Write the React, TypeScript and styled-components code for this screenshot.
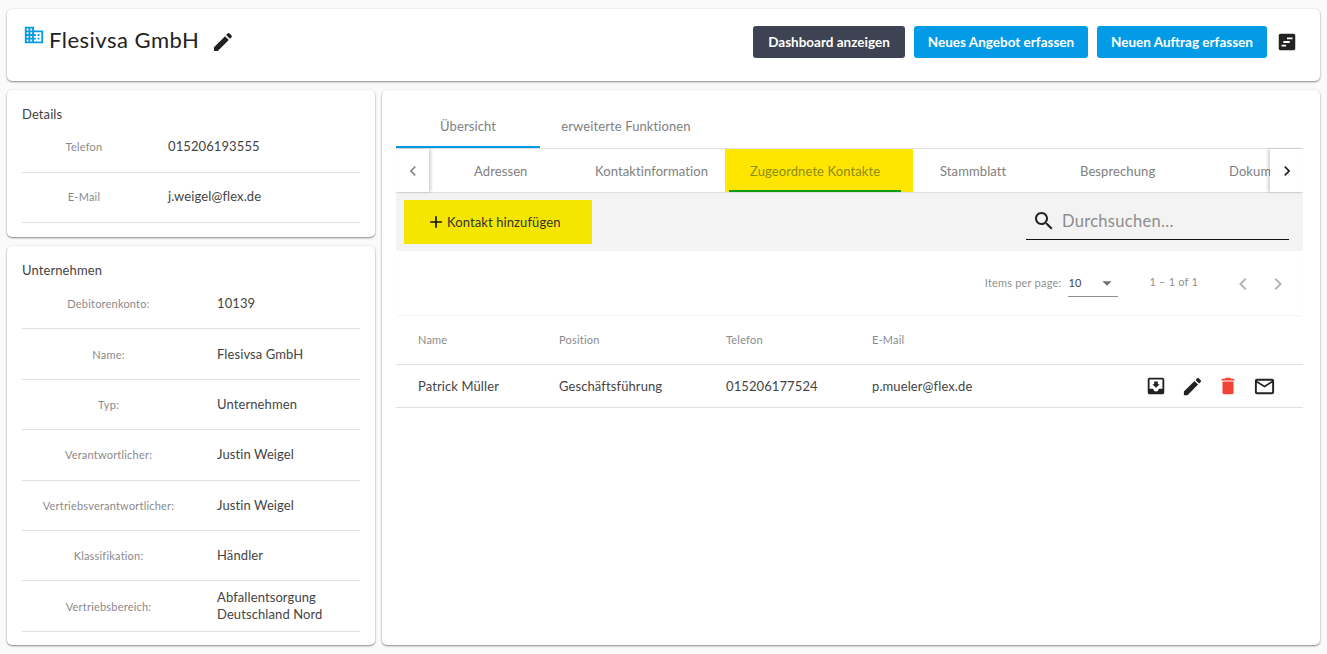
import * as React from 'react'
import styled, { createGlobalStyle } from 'styled-components'

const GlobalStyle = createGlobalStyle`
  html, body {
    margin: 0;
    padding: 0;
    background: #fafafa;
    font-family: "Lato", "Open Sans", sans-serif;
    color: #333;
  }
  * { box-sizing: border-box; }
`

const Page = styled.div`
  width: 1327px;
  height: 654px;
  padding: 9px 7px;
  overflow: hidden;
  display: flex;
  flex-direction: column;
  gap: 9px;
`
const Card = styled.div`
  background: #fff;
  border-radius: 5px;
  box-shadow: 0 1px 2px rgba(0, 0, 0, 0.45), 0 0 3px rgba(0, 0, 0, 0.06);
`
const Header = styled(Card)`
  height: 72px;
  flex: none;
  padding: 15px 22px 0 16px;
  display: flex;
  justify-content: space-between;
  align-items: flex-start;
`
const TitleBox = styled.div`
  display: flex;
  align-items: flex-start;
`
const Title = styled.div`
  font-size: 22px;
  line-height: 30px;
  color: #222;
  margin: 1px 12px 0 4px;
  letter-spacing: 0.5px;
`
const EditSlot = styled.span`
  padding-top: 6px;
`
const Actions = styled.div`
  display: flex;
  align-items: center;
  gap: 9px;
  padding-top: 2px;
`
const ActionButton = styled.div<{ $dark?: boolean; $w: number }>`
  width: ${p => p.$w}px;
  height: 32px;
  border-radius: 3px;
  background: ${p => (p.$dark ? '#3e4354' : '#039be5')};
  color: #fff;
  font-size: 13.5px;
  font-weight: 700;
  display: flex;
  align-items: center;
  justify-content: center;
`
const Body = styled.div`
  flex: 1;
  display: flex;
  gap: 7px;
  min-height: 0;
`
const LeftColumn = styled.div`
  width: 368px;
  flex: none;
  display: flex;
  flex-direction: column;
  gap: 9px;
`
const InfoCard = styled(Card)<{ $grow?: boolean }>`
  padding: 15px 15px 0;
  height: ${p => (p.$grow ? 'auto' : '147px')};
  flex: ${p => (p.$grow ? 1 : 'none')};
`
const InfoTitle = styled.div`
  font-size: 13px;
  line-height: 18px;
  color: #444;
  letter-spacing: 0.1px;
`
const InfoRow = styled.div<{ $h: number; $pb?: number }>`
  height: ${p => p.$h}px;
  padding-bottom: ${p => p.$pb ?? 0}px;
  border-bottom: 1px solid #e0e0e0;
  display: flex;
  align-items: center;
`
const InfoLabel = styled.div<{ $w: number }>`
  width: ${p => p.$w}px;
  flex: none;
  text-align: center;
  font-size: 11px;
  color: #8a8a8a;
  letter-spacing: 0.2px;
  margin-right: 22px;
`
const InfoValue = styled.div`
  font-size: 13px;
  line-height: 17px;
  color: #444;
  letter-spacing: 0.1px;
`
const MainCard = styled(Card)`
  flex: 1;
  min-width: 0;
  padding: 0 17px 0 14px;
  display: flex;
  flex-direction: column;
`
const TopTabs = styled.div`
  display: flex;
  height: 59px;
  border-bottom: 1px solid #e0e0e0;
  flex: none;
`
const TopTab = styled.div<{ $active?: boolean; $w: number }>`
  width: ${p => p.$w}px;
  height: 58px;
  padding-top: 16px;
  border-bottom: 2px solid ${p => (p.$active ? '#039be5' : 'transparent')};
  display: flex;
  align-items: center;
  justify-content: center;
  font-size: 13px;
  color: #808080;
  letter-spacing: 0.1px;
`
const SubTabs = styled.div`
  display: flex;
  height: 44px;
  flex: none;
  border-bottom: 1px solid #e0e0e0;
`
const Scroller = styled.div<{ $right?: boolean }>`
  width: 33px;
  flex: none;
  display: flex;
  align-items: center;
  justify-content: center;
  background: #fff;
  z-index: 1;
  box-shadow: ${p => (p.$right ? '-2px 0 3px rgba(0,0,0,0.18)' : '2px 0 3px rgba(0,0,0,0.18)')};
  color: ${p => (p.$right ? '#222' : '#888')};
`
const SubTabList = styled.div`
  flex: 1;
  display: flex;
  overflow: hidden;
  min-width: 0;
`
const SubTab = styled.div<{ $w: number; $pad: number; $active?: boolean }>`
  width: ${p => p.$w}px;
  flex: none;
  position: relative;
  padding-left: ${p => p.$pad}px;
  display: flex;
  align-items: center;
  font-size: 13px;
  white-space: nowrap;
  letter-spacing: 0.1px;
  background: ${p => (p.$active ? '#ffe600' : 'transparent')};
  color: ${p => (p.$active ? '#8c8c10' : '#808080')};
`
const ActiveBar = styled.span`
  position: absolute;
  left: 4px;
  right: 12px;
  bottom: 0;
  height: 2px;
  background: #0a9a0a;
`
const Toolbar = styled.div`
  height: 58px;
  flex: none;
  background: #f3f3f3;
  padding: 7px 14px 0 8px;
  display: flex;
  justify-content: space-between;
  align-items: flex-start;
`
const AddButton = styled.div`
  width: 188px;
  height: 44px;
  background: #f5e600;
  padding-left: 22px;
  display: flex;
  align-items: center;
  gap: 1px;
  font-size: 13px;
  color: #333;
  letter-spacing: 0.1px;
`
const SearchBox = styled.div`
  width: 263px;
  height: 40px;
  border-bottom: 1.5px solid #111;
  padding: 3px 0 0 6px;
  display: flex;
  align-items: center;
  gap: 6px;
  font-size: 16.5px;
  color: #8d8d8d;
  letter-spacing: 0.3px;
`
const Paginator = styled.div`
  height: 64px;
  flex: none;
  display: flex;
  align-items: flex-start;
  padding: 18px 13px 0 0;
  justify-content: flex-end;
  box-shadow: 0 1px 2px -1px rgba(0, 0, 0, 0.12);
  font-size: 11px;
  color: #8f8f8f;
  letter-spacing: 0.2px;
`
const PageLabel = styled.div`
  line-height: 28px;
  margin-right: 7px;
`
const PageSelect = styled.div`
  width: 50px;
  height: 28px;
  border-bottom: 1px solid #8f8f8f;
  display: flex;
  align-items: center;
  justify-content: space-between;
  color: #444;
  margin-right: 31px;
`
const PageRange = styled.div`
  line-height: 26px;
  margin-right: 33px;
`
const PageArrows = styled.div`
  display: flex;
  gap: 11px;
  margin-top: 3px;
  color: #b5b5b5;
`
const HeaderRow = styled.div`
  height: 50px;
  flex: none;
  display: grid;
  grid-template-columns: 141px 167px 146px 1fr;
  align-items: center;
  padding: 0 0 1px 22px;
  border-bottom: 1px solid #e0e0e0;
  font-size: 11px;
  color: #8a8a8a;
  letter-spacing: 0.2px;
`
const DataRow = styled.div`
  height: 43px;
  flex: none;
  display: grid;
  grid-template-columns: 141px 167px 146px 1fr auto;
  align-items: center;
  padding: 0 21px 0 22px;
  border-bottom: 1px solid #e0e0e0;
  font-size: 13px;
  color: #444;
  letter-spacing: 0.1px;
`
const RowIcons = styled.div`
  display: flex;
  align-items: center;
  color: #222;
`
const IconSlot = styled.span<{ $red?: boolean }>`
  width: 36px;
  display: flex;
  justify-content: center;
  color: ${p => (p.$red ? '#f44336' : 'inherit')};
`

const paths = {
  business: 'M12 7V3H2v18h20V7H12zM6 19H4v-2h2v2zm0-4H4v-2h2v2zm0-4H4V9h2v2zm0-4H4V5h2v2zm4 12H8v-2h2v2zm0-4H8v-2h2v2zm0-4H8V9h2v2zm0-4H8V5h2v2zm10 12h-8v-2h2v-2h-2v-2h2v-2h-2V9h8v10zm-2-8h-2v2h2v-2zm0 4h-2v2h2v-2z',
  edit: 'M3 17.25V21h3.75L17.81 9.94l-3.75-3.75L3 17.25zM20.71 7.04c.39-.39.39-1.02 0-1.41l-2.34-2.34c-.39-.39-1.02-.39-1.41 0l-1.83 1.83 3.75 3.75 1.83-1.83z',
  notes: 'M19 3H5c-1.1 0-2 .9-2 2v14c0 1.1.9 2 2 2h14c1.1 0 2-.9 2-2V5c0-1.1-.9-2-2-2zm-8 14H6v-2h5v2zm4-4H8v-2h7v2zm3-4h-6V7h6v2z',
  inbox: 'M19 3H4.99c-1.11 0-1.98.9-1.98 2L3 19c0 1.1.88 2 1.99 2H19c1.1 0 2-.9 2-2V5c0-1.1-.9-2-2-2zm0 12h-4c0 1.66-1.35 3-3 3s-3-1.34-3-3H4.99V5H19v10zm-3-5h-2V7h-4v3H8l4 4 4-4z',
  trash: 'M6 19c0 1.1.9 2 2 2h8c1.1 0 2-.9 2-2V7H6v12zM19 4h-3.5l-1-1h-5l-1 1H5v2h14V4z',
  mail: 'M20 4H4c-1.1 0-1.99.9-1.99 2L2 18c0 1.1.9 2 2 2h16c1.1 0 2-.9 2-2V6c0-1.1-.9-2-2-2zm0 14H4V8l8 5 8-5v10zm-8-7L4 6h16l-8 5z',
  search: 'M15.5 14h-.79l-.28-.27C15.41 12.59 16 11.11 16 9.5 16 5.91 13.09 3 9.5 3S3 5.91 3 9.5 5.91 16 9.5 16c1.61 0 3.09-.59 4.23-1.57l.27.28v.79l5 4.99L20.49 19l-4.99-5zm-6 0C7.01 14 5 11.99 5 9.5S7.01 5 9.5 5 14 7.01 14 9.5 11.99 14 9.5 14z',
  plus: 'M19 13h-6v6h-2v-6H5v-2h6V5h2v6h6v2z',
  left: 'M15.41 7.41 14 6l-6 6 6 6 1.41-1.41L10.83 12z',
  right: 'M10 6 8.59 7.41 13.17 12l-4.58 4.59L10 18l6-6z',
  drop: 'M7 10l5 5 5-5z',
}

function Icon(props: { d: string; size?: number; color?: string }) {
  const size = props.size ?? 24
  return (
    <svg width={size} height={size} viewBox="0 0 24 24" fill={props.color ?? 'currentColor'} style={{ flex: 'none', display: 'block' }}>
      <path d={props.d} />
    </svg>
  )
}

const details = [
  ['Telefon', '015206193555'],
  ['E-Mail', 'j.weigel@flex.de'],
]
const company = [
  ['Debitorenkonto:', '10139'],
  ['Name:', 'Flesivsa GmbH'],
  ['Typ:', 'Unternehmen'],
  ['Verantwortlicher:', 'Justin Weigel'],
  ['Vertriebsverantwortlicher:', 'Justin Weigel'],
  ['Klassifikation:', 'Händler'],
  ['Vertriebsbereich:', 'Abfallentsorgung Deutschland Nord'],
]
const subTabs = [
  { label: 'Adressen', w: 145, pad: 45 },
  { label: 'Kontaktinformation', w: 151, pad: 21 },
  { label: 'Zugeordnete Kontakte', w: 188, pad: 25, active: true },
  { label: 'Stammblatt', w: 123, pad: 27 },
  { label: 'Besprechung', w: 149, pad: 44 },
  { label: 'Dokumente', w: 120, pad: 44 },
]

export default function App() {
  return (
    <Page>
      <GlobalStyle />
      <Header>
        <TitleBox>
          <Icon d={paths.business} size={22} color="#039be5" />
          <Title>Flesivsa GmbH</Title>
          <EditSlot><Icon d={paths.edit} color="#222" /></EditSlot>
        </TitleBox>
        <Actions>
          <ActionButton $dark $w={152}>Dashboard anzeigen</ActionButton>
          <ActionButton $w={174}>Neues Angebot erfassen</ActionButton>
          <ActionButton $w={170}>Neuen Auftrag erfassen</ActionButton>
          <Icon d={paths.notes} size={22} color="#222" />
        </Actions>
      </Header>
      <Body>
        <LeftColumn>
          <InfoCard>
            <InfoTitle>Details</InfoTitle>
            {details.map(([k, v]) => (
              <InfoRow key={k} $h={50} $pb={2}>
                <InfoLabel $w={124}>{k}</InfoLabel>
                <InfoValue>{v}</InfoValue>
              </InfoRow>
            ))}
          </InfoCard>
          <InfoCard $grow>
            <InfoTitle>Unternehmen</InfoTitle>
            {company.map(([k, v]) => (
              <InfoRow key={k} $h={50.4}>
                <InfoLabel $w={173}>{k}</InfoLabel>
                <InfoValue>{v}</InfoValue>
              </InfoRow>
            ))}
          </InfoCard>
        </LeftColumn>
        <MainCard>
          <TopTabs>
            <TopTab $active $w={144}>Übersicht</TopTab>
            <TopTab $w={172}>erweiterte Funktionen</TopTab>
          </TopTabs>
          <SubTabs>
            <Scroller><Icon d={paths.left} size={20} /></Scroller>
            <SubTabList>
              {subTabs.map(t => (
                <SubTab key={t.label} $w={t.w} $pad={t.pad} $active={t.active}>
                  {t.label}
                  {t.active && <ActiveBar />}
                </SubTab>
              ))}
            </SubTabList>
            <Scroller $right><Icon d={paths.right} size={20} /></Scroller>
          </SubTabs>
          <Toolbar>
            <AddButton><Icon d={paths.plus} size={20} color="#111" />Kontakt hinzufügen</AddButton>
            <SearchBox><Icon d={paths.search} color="#222" />Durchsuchen...</SearchBox>
          </Toolbar>
          <Paginator>
            <PageLabel>Items per page:</PageLabel>
            <PageSelect>10<Icon d={paths.drop} size={22} color="#707070" /></PageSelect>
            <PageRange>1 – 1 of 1</PageRange>
            <PageArrows>
              <Icon d={paths.left} />
              <Icon d={paths.right} />
            </PageArrows>
          </Paginator>
          <HeaderRow>
            <span>Name</span>
            <span>Position</span>
            <span>Telefon</span>
            <span>E-Mail</span>
          </HeaderRow>
          <DataRow>
            <span>Patrick Müller</span>
            <span>Geschäftsführung</span>
            <span>015206177524</span>
            <span>p.mueler@flex.de</span>
            <RowIcons>
              <IconSlot><Icon d={paths.inbox} size={22} /></IconSlot>
              <IconSlot><Icon d={paths.edit} size={23} /></IconSlot>
              <IconSlot $red><Icon d={paths.trash} size={22} /></IconSlot>
              <IconSlot><Icon d={paths.mail} size={23} /></IconSlot>
            </RowIcons>
          </DataRow>
        </MainCard>
      </Body>
    </Page>
  )
}
